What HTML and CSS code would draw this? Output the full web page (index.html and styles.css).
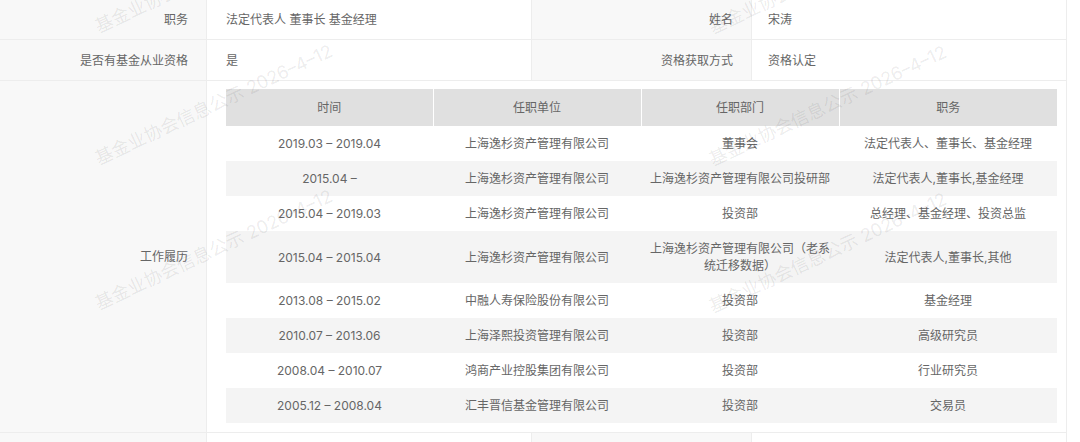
FILE: index.html
```html
<!DOCTYPE html>
<html lang="zh-CN">
<head>
<meta charset="utf-8">
<title>基金从业人员信息</title>
<link rel="stylesheet" href="styles.css">
</head>
<body>
<div class="page">
  <div class="info-grid">
    <div class="label">职务</div>
    <div class="value">法定代表人 董事长 基金经理</div>
    <div class="label">姓名</div>
    <div class="value value-right">宋涛</div>

    <div class="label row2">是否有基金从业资格</div>
    <div class="value row2">是</div>
    <div class="label row2">资格获取方式</div>
    <div class="value value-right row2">资格认定</div>

    <div class="label row3">工作履历</div>
    <div class="value wide row3">
      <table class="history">
        <colgroup>
          <col class="c1"><col class="c2"><col class="c3"><col class="c4">
        </colgroup>
        <thead>
          <tr><th>时间</th><th>任职单位</th><th>任职部门</th><th>职务</th></tr>
        </thead>
        <tbody>
          <tr><td>2019.03 – 2019.04</td><td>上海逸杉资产管理有限公司</td><td>董事会</td><td>法定代表人、董事长、基金经理</td></tr>
          <tr><td>2015.04 –</td><td>上海逸杉资产管理有限公司</td><td>上海逸杉资产管理有限公司投研部</td><td>法定代表人,董事长,基金经理</td></tr>
          <tr><td>2015.04 – 2019.03</td><td>上海逸杉资产管理有限公司</td><td>投资部</td><td>总经理、基金经理、投资总监</td></tr>
          <tr><td>2015.04 – 2015.04</td><td>上海逸杉资产管理有限公司</td><td>上海逸杉资产管理有限公司（老系统迁移数据）</td><td>法定代表人,董事长,其他</td></tr>
          <tr><td>2013.08 – 2015.02</td><td>中融人寿保险股份有限公司</td><td>投资部</td><td>基金经理</td></tr>
          <tr><td>2010.07 – 2013.06</td><td>上海泽熙投资管理有限公司</td><td>投资部</td><td>高级研究员</td></tr>
          <tr><td>2008.04 – 2010.07</td><td>鸿商产业控股集团有限公司</td><td>投资部</td><td>行业研究员</td></tr>
          <tr><td>2005.12 – 2008.04</td><td>汇丰晋信基金管理有限公司</td><td>投资部</td><td>交易员</td></tr>
        </tbody>
      </table>
    </div>

    <div class="label row4"></div>
    <div class="value row4"></div>
    <div class="label row4"></div>
    <div class="value value-right row4"></div>
  </div>

  <div class="watermarks" aria-hidden="true">
    <span class="wm wm-l1">基金业协会信息公示 2026–4–12</span>
    <span class="wm wm-l2">基金业协会信息公示 2026–4–12</span>
    <span class="wm wm-l3">基金业协会信息公示 2026–4–12</span>
    <span class="wm wm-r1">基金业协会信息公示 2026–4–12</span>
    <span class="wm wm-r2">基金业协会信息公示 2026–4–12</span>
    <span class="wm wm-r3">基金业协会信息公示 2026–4–12</span>
  </div>
</div>
</body>
</html>
```

FILE: styles.css
```css
html, body {
  margin: 0;
  padding: 0;
  background: #ffffff;
}

body {
  font-family: "Inter", "Noto Sans CJK SC", sans-serif;
  font-size: 12px;
  color: #666666;
  overflow: hidden;
}

.page {
  position: relative;
  width: 1080px;
  height: 442px;
  overflow: hidden;
}

.info-grid {
  display: grid;
  grid-template-columns: 206px 324px 219px 314px;
  grid-template-rows: 39px 40px 351px 40px;
  gap: 1px;
  width: 1066px;
  background: #ededed;
  border-right: 1px solid #ededed;
}

.label {
  background: #f8f8f8;
  display: flex;
  align-items: center;
  justify-content: flex-end;
  padding-right: 18px;
  line-height: 17px;
}

.value {
  background: #ffffff;
  display: flex;
  align-items: center;
  padding-left: 19px;
  line-height: 17px;
}

.value-right {
  padding-left: 16px;
}

.wide {
  grid-column: 2 / 5;
  padding: 8px 9px 8px 19px;
  align-items: flex-start;
}

.history {
  width: 831px;
  border-collapse: collapse;
  table-layout: fixed;
}

.history .c1 { width: 207px; }
.history .c2 { width: 208px; }
.history .c3 { width: 198px; }
.history .c4 { width: 218px; }

.history th {
  background: #e0e0e0;
  font-weight: normal;
  color: #666666;
  height: 37px;
  padding: 0 8px;
  line-height: 17px;
  text-align: center;
  border-left: 1px solid #ffffff;
}

.history th:first-child {
  border-left: none;
}

.history td {
  padding: 9px 8px;
  line-height: 17px;
  text-align: center;
  color: #666666;
}

.history tbody tr:nth-child(even) td {
  background: #f4f4f4;
}

.watermarks {
  position: absolute;
  inset: 0;
  pointer-events: none;
}

.wm {
  position: absolute;
  font-size: 18px;
  line-height: 18px;
  white-space: nowrap;
  color: rgba(0, 0, 0, 0.085);
  transform: rotate(-25deg);
  transform-origin: 0 100%;
}

.wm-l1 { left: 100px; top: 18px; }
.wm-l2 { left: 100px; top: 150px; }
.wm-l3 { left: 100px; top: 295px; }
.wm-r1 { left: 714px; top: 19px; }
.wm-r2 { left: 714px; top: 151px; }
.wm-r3 { left: 714px; top: 298px; }
```
